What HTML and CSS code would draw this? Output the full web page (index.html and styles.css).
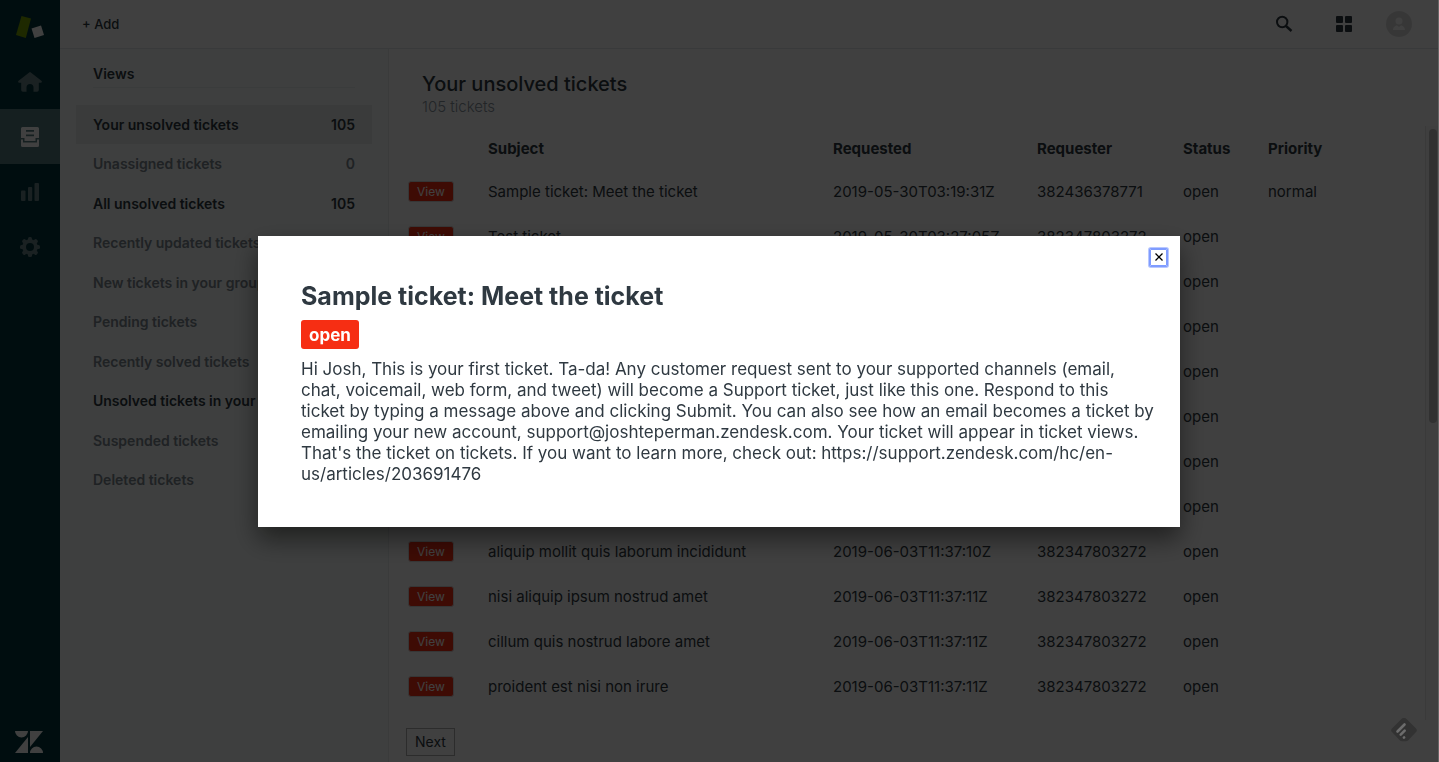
FILE: index.html
```html
<!DOCTYPE html>
<html lang="en">
<head>
<meta charset="utf-8">
<title>Your unsolved tickets</title>
<link rel="stylesheet" href="styles.css">
</head>
<body>
<div class="app">
  <nav class="rail" aria-label="Main">
    <a class="rail-logo" href="#" aria-label="Support">
      <svg width="30" height="26" viewBox="0 0 30 26"><path fill="#78a300" d="M6.500 2l9.500 2.500-5.200 19.500L1 21z"/><path fill="#fff" d="M16.500 14.500l9.500-3 3 9.500-9.500 3z"/></svg>
    </a>
    <a class="rail-item" href="#" aria-label="Home">
      <svg width="26" height="22" viewBox="0 0 26 22"><path d="M12.200 1.400a1.300 1.300 0 0 1 1.600 0l10.600 8.400c1 .8.500 2-.6 2h-2v7.200a1.800 1.800 0 0 1-1.800 1.800h-3.500v-4.300a3.500 3.500 0 0 0-7 0v4.300H6a1.800 1.800 0 0 1-1.800-1.800v-7.200h-2c-1.100 0-1.600-1.200-.6-2z"/></svg>
    </a>
    <a class="rail-item rail-item-active" href="#" aria-label="Views">
      <svg width="18" height="20" viewBox="0 0 18 20"><path fill-rule="evenodd" d="M1.500 0h15A1.500 1.500 0 0 1 18 1.500V11h-3.500v3h-11v-3H0V1.500A1.500 1.500 0 0 1 1.500 0zM5 3v1.800h8V3zm0 4.500v1.800h8V7.500zM0 12.500h2v3h14v-3h2v6a1.500 1.500 0 0 1-1.500 1.500h-15A1.500 1.500 0 0 1 0 18.500z"/></svg>
    </a>
    <a class="rail-item" href="#" aria-label="Reporting">
      <svg width="18" height="18" viewBox="0 0 18 18"><rect y="7.500" width="4.500" height="10.500" rx="1"/><rect x="7" y="4" width="4.200" height="14" rx="1"/><rect x="13.500" width="4.500" height="18" rx="1"/></svg>
    </a>
    <a class="rail-item" href="#" aria-label="Admin">
      <svg width="20" height="20" viewBox="-10 -10 20 20"><g><rect x="-2" y="-10" width="4" height="20" rx="1.500"/><rect x="-2" y="-10" width="4" height="20" rx="1.500" transform="rotate(45)"/><rect x="-2" y="-10" width="4" height="20" rx="1.500" transform="rotate(90)"/><rect x="-2" y="-10" width="4" height="20" rx="1.500" transform="rotate(135)"/><circle r="7.800"/></g><circle r="4" fill="#03363d"/></svg>
    </a>
    <a class="rail-brand" href="#" aria-label="Zendesk">
      <svg width="28" height="22" viewBox="0 0 28 22"><path d="M0 0h13a6.500 6.500 0 0 1-13 0zM13 6v16H0zM15 0h13L15 16zM15 22a6.500 6.500 0 0 1 13 0z"/></svg>
    </a>
  </nav>

  <div class="workspace">
    <header class="topbar">
      <button class="add" type="button">+ Add</button>
      <div class="tools">
        <button class="tool" type="button" aria-label="Search">
          <svg width="18" height="18" viewBox="0 0 18 18" fill="none" stroke="#2f3941"><circle cx="7.200" cy="7" r="5.200" stroke-width="2"/><path stroke-width="2.400" d="M11 11l5.500 5"/></svg>
        </button>
        <button class="tool" type="button" aria-label="Products">
          <svg width="16" height="16" viewBox="0 0 16 16" fill="#2f3941"><rect width="7" height="7" rx="1"/><rect x="9" width="7" height="7" rx="1"/><rect y="9" width="7" height="7" rx="1"/><rect x="9" y="9" width="7" height="7" rx="1"/></svg>
        </button>
        <button class="tool tool-profile" type="button" aria-label="Profile">
          <svg width="26" height="26" viewBox="0 0 26 26"><circle cx="13" cy="13" r="13" fill="#dcdcdc"/><circle cx="13" cy="10" r="3.500" fill="#fff"/><path fill="#fff" d="M7 19c0-3 2.500-4.500 4-4.500l2 1.500 2-1.500c1.500 0 4 1.500 4 4.500z"/></svg>
        </button>
      </div>
    </header>

    <div class="content">
      <aside class="views">
        <h2 class="views-title">Views</h2>
        <ul class="views-list">
          <li><a class="view view-current" href="#"><span>Your unsolved tickets</span><span>105</span></a></li>
          <li><a class="view" href="#"><span>Unassigned tickets</span><span>0</span></a></li>
          <li><a class="view view-strong" href="#"><span>All unsolved tickets</span><span>105</span></a></li>
          <li><a class="view" href="#"><span>Recently updated tickets</span></a></li>
          <li><a class="view" href="#"><span>New tickets in your groups</span></a></li>
          <li><a class="view" href="#"><span>Pending tickets</span></a></li>
          <li><a class="view" href="#"><span>Recently solved tickets</span></a></li>
          <li><a class="view view-strong" href="#"><span>Unsolved tickets in your groups</span></a></li>
          <li><a class="view" href="#"><span>Suspended tickets</span></a></li>
          <li><a class="view" href="#"><span>Deleted tickets</span></a></li>
        </ul>
      </aside>

      <main class="main">
        <div class="heading">
          <h1 class="heading-title">Your unsolved tickets</h1>
          <p class="heading-count">105 tickets</p>
        </div>
        <div class="list">
          <table class="tickets">
            <colgroup><col class="c-action"><col class="c-subject"><col class="c-date"><col class="c-requester"><col class="c-status"><col></colgroup>
            <thead><tr><th></th><th>Subject</th><th>Requested</th><th>Requester</th><th>Status</th><th>Priority</th></tr></thead>
            <tbody>
              <tr><td><button class="open-ticket" type="button">View</button></td><td>Sample ticket: Meet the ticket</td><td>2019-05-30T03:19:31Z</td><td>382436378771</td><td>open</td><td>normal</td></tr>
              <tr><td><button class="open-ticket" type="button">View</button></td><td>Test ticket</td><td>2019-05-30T03:27:05Z</td><td>382347803272</td><td>open</td><td></td></tr>
              <tr><td></td><td></td><td></td><td></td><td>open</td><td></td></tr>
              <tr><td></td><td></td><td></td><td></td><td>open</td><td></td></tr>
              <tr><td></td><td></td><td></td><td></td><td>open</td><td></td></tr>
              <tr><td></td><td></td><td></td><td></td><td>open</td><td></td></tr>
              <tr><td></td><td></td><td></td><td></td><td>open</td><td></td></tr>
              <tr><td></td><td></td><td></td><td></td><td>open</td><td></td></tr>
              <tr><td><button class="open-ticket" type="button">View</button></td><td>aliquip mollit quis laborum incididunt</td><td>2019-06-03T11:37:10Z</td><td>382347803272</td><td>open</td><td></td></tr>
              <tr><td><button class="open-ticket" type="button">View</button></td><td>nisi aliquip ipsum nostrud amet</td><td>2019-06-03T11:37:11Z</td><td>382347803272</td><td>open</td><td></td></tr>
              <tr><td><button class="open-ticket" type="button">View</button></td><td>cillum quis nostrud labore amet</td><td>2019-06-03T11:37:11Z</td><td>382347803272</td><td>open</td><td></td></tr>
              <tr><td><button class="open-ticket" type="button">View</button></td><td>proident est nisi non irure</td><td>2019-06-03T11:37:11Z</td><td>382347803272</td><td>open</td><td></td></tr>
            </tbody>
          </table>
          <div class="track"><div class="thumb"></div></div>
        </div>
        <div class="pager">
          <button class="next" type="button">Next</button>
        </div>
      </main>
    </div>
  </div>
</div>

<div class="overlay">
  <section class="modal" role="dialog" aria-modal="true" aria-labelledby="ticket-title">
    <button class="close" type="button" aria-label="Close">
      <svg width="8" height="8" viewBox="0 0 8 8"><path fill="none" stroke="#000" stroke-width="1.300" d="M.5.500l7 7M7.500.500l-7 7"/></svg>
    </button>
    <h2 class="modal-title" id="ticket-title">Sample ticket: Meet the ticket</h2>
    <span class="badge">open</span>
    <p class="modal-text">Hi Josh, This is your first ticket. Ta-da! Any customer request sent to your supported channels (email,<br>chat, voicemail, web form, and tweet) will become a Support ticket, just like this one. Respond to this<br>ticket by typing a message above and clicking Submit. You can also see how an email becomes a ticket by<br>emailing your new account, support@joshteperman.zendesk.com. Your ticket will appear in ticket views.<br>That's the ticket on tickets. If you want to learn more, check out: https://support.zendesk.com/hc/en-<br>us/articles/203691476</p>
  </section>
</div>

<svg class="helper" width="26" height="24" viewBox="0 0 26 24"><path fill="#323232" d="M10.500 1a3.500 3.500 0 0 1 5 0l9.500 9.500a2.500 2.500 0 0 1 0 3.500l-8 8.500a3 3 0 0 1-2 .8h-4a3 3 0 0 1-2-.8L1 14a2.500 2.500 0 0 1 0-3.500z"/><path fill="none" stroke="#6c6c6c" stroke-width="2.600" stroke-linecap="round" d="M6.500 13.500l7-7M9.700 16.700l4-4M12.900 19.700l.2-.2"/></svg>
</body>
</html>
```
FILE: styles.css
```css
* {
  box-sizing: border-box;
}

body {
  margin: 0;
  font-family: Inter, "Liberation Sans", sans-serif;
  font-size: 15px;
  color: #2f3941;
  background: #fff;
}

h1,
h2,
p,
ul {
  margin: 0;
  padding: 0;
}

button {
  font: inherit;
  color: inherit;
  padding: 0;
  border: 0;
  background: none;
}

a {
  color: inherit;
  text-decoration: none;
}

svg {
  display: block;
}

.app {
  display: flex;
  height: 100vh;
  overflow: hidden;
}

/* Left navigation */

.rail {
  display: flex;
  flex-direction: column;
  flex: none;
  width: 60px;
  background: #03363d;
}

.rail-logo,
.rail-item {
  display: flex;
  align-items: center;
  justify-content: center;
  height: 54px;
}

.rail-item {
  height: 55px;
  fill: #688488;
}

.rail-item-active {
  background: #547c80;
  fill: #fff;
}

.rail-brand {
  margin-top: auto;
  padding: 0 15px 9px;
  fill: #fff;
}

/* Top bar */

.workspace {
  display: flex;
  flex-direction: column;
  flex: 1;
  min-width: 0;
}

.topbar {
  display: flex;
  align-items: center;
  justify-content: space-between;
  height: 49px;
  padding: 0 27px 1px 22px;
  border-bottom: 1px solid #e4e8e9;
}

.add {
  font-size: 13px;
  font-weight: 500;
}

.tools {
  display: flex;
  gap: 16px;
}

.tool {
  display: flex;
  align-items: center;
  justify-content: center;
  width: 44px;
  height: 26px;
}

.tool-profile {
  width: 26px;
  margin-left: 4px;
}

/* Views panel */

.content {
  display: flex;
  flex: 1;
  min-height: 0;
}

.views {
  flex: none;
  width: 329px;
  padding: 16px;
  background: #f6fbf9;
  border-right: 1px solid #e6ecec;
}

.views-title {
  margin: 0 17px 17px;
  padding-bottom: 4px;
  font-size: 14px;
  line-height: 18px;
  font-weight: 600;
  border-bottom: 1px solid #e8eded;
}

.views-list {
  list-style: none;
}

.views-list li:nth-child(even) {
  margin-bottom: 1px;
}

.view {
  display: flex;
  align-items: center;
  justify-content: space-between;
  height: 39px;
  padding: 0 17px;
  font-size: 14px;
  font-weight: 600;
  color: #7c868f;
}

.view-current {
  color: #2f3941;
  background: #e6ecea;
}

.view-strong {
  color: #2f3941;
}

/* Ticket list */

.main {
  display: flex;
  flex-direction: column;
  flex: 1;
  min-width: 0;
}

.heading {
  padding: 23px 33px 10px;
}

.heading-title {
  font-size: 20px;
  line-height: 25px;
  font-weight: 500;
}

.heading-count {
  font-size: 15px;
  line-height: 19px;
  font-weight: 300;
  color: #87929d;
}

.list {
  display: flex;
  flex: 1;
  min-height: 0;
  padding-left: 17px;
}

.tickets {
  flex: 1;
  align-self: flex-start;
  table-layout: fixed;
  width: 100%;
  border-collapse: collapse;
  white-space: nowrap;
}

.c-action {
  width: 80px;
}

.c-subject {
  width: 345px;
}

.c-date {
  width: 204px;
}

.c-requester {
  width: 146px;
}

.c-status {
  width: 85px;
}

.tickets th,
.tickets td {
  height: 45px;
  padding: 0 2px;
  text-align: left;
}

.tickets th {
  height: 43px;
  padding-top: 2px;
  font-weight: 700;
}

.open-ticket {
  display: block;
  height: 21px;
  padding: 0 8px;
  font-size: 12px;
  line-height: 19px;
  color: #fff;
  background: #f62e13;
  border: 1px solid #d8d8d8;
  border-radius: 3px;
}

.track {
  flex: none;
  width: 14px;
  padding: 3px;
  background: #fafafa;
  border-left: 1px solid #e8e8e8;
}

.thumb {
  width: 8px;
  height: 50%;
  border-radius: 4px;
  background: #c1c1c1;
}

.pager {
  padding: 8px 17px 6px;
}

.next {
  display: block;
  height: 28px;
  padding: 0 8px 1px;
  font-size: 14px;
  border: 1px solid #b0b0b0;
}

/* Ticket dialog */

.overlay {
  position: fixed;
  inset: 0;
  display: flex;
  align-items: center;
  justify-content: center;
  background: rgba(0, 0, 0, 0.75);
  border-right: 1px solid #666;
}

.modal {
  position: relative;
  width: 922px;
  max-width: 90%;
  padding: 44px 20px 42px 43px;
  background: #fff;
  box-shadow: 0 12px 24px rgba(0, 0, 0, 0.5);
}

.modal-title {
  margin-bottom: 7px;
  font-size: 25px;
  line-height: 33px;
  font-weight: 700;
}

.badge {
  display: inline-block;
  padding: 1px 8px 0;
  font-size: 17px;
  line-height: 28px;
  font-weight: 700;
  color: #fff;
  background: #f62e13;
  border-radius: 3px;
}

.modal-text {
  margin-top: 10px;
  font-size: 17px;
  line-height: 21px;
}

.close {
  position: absolute;
  top: 13px;
  right: 13px;
  display: flex;
  align-items: center;
  justify-content: center;
  width: 17px;
  height: 17px;
  border: 1px solid #7f9cff;
  box-shadow: 0 0 0 1px #7f9cff, 0 0 0 2px #b9c8ff;
  border-radius: 1px;
}

.helper {
  position: fixed;
  right: 22px;
  bottom: 20px;
}
```
